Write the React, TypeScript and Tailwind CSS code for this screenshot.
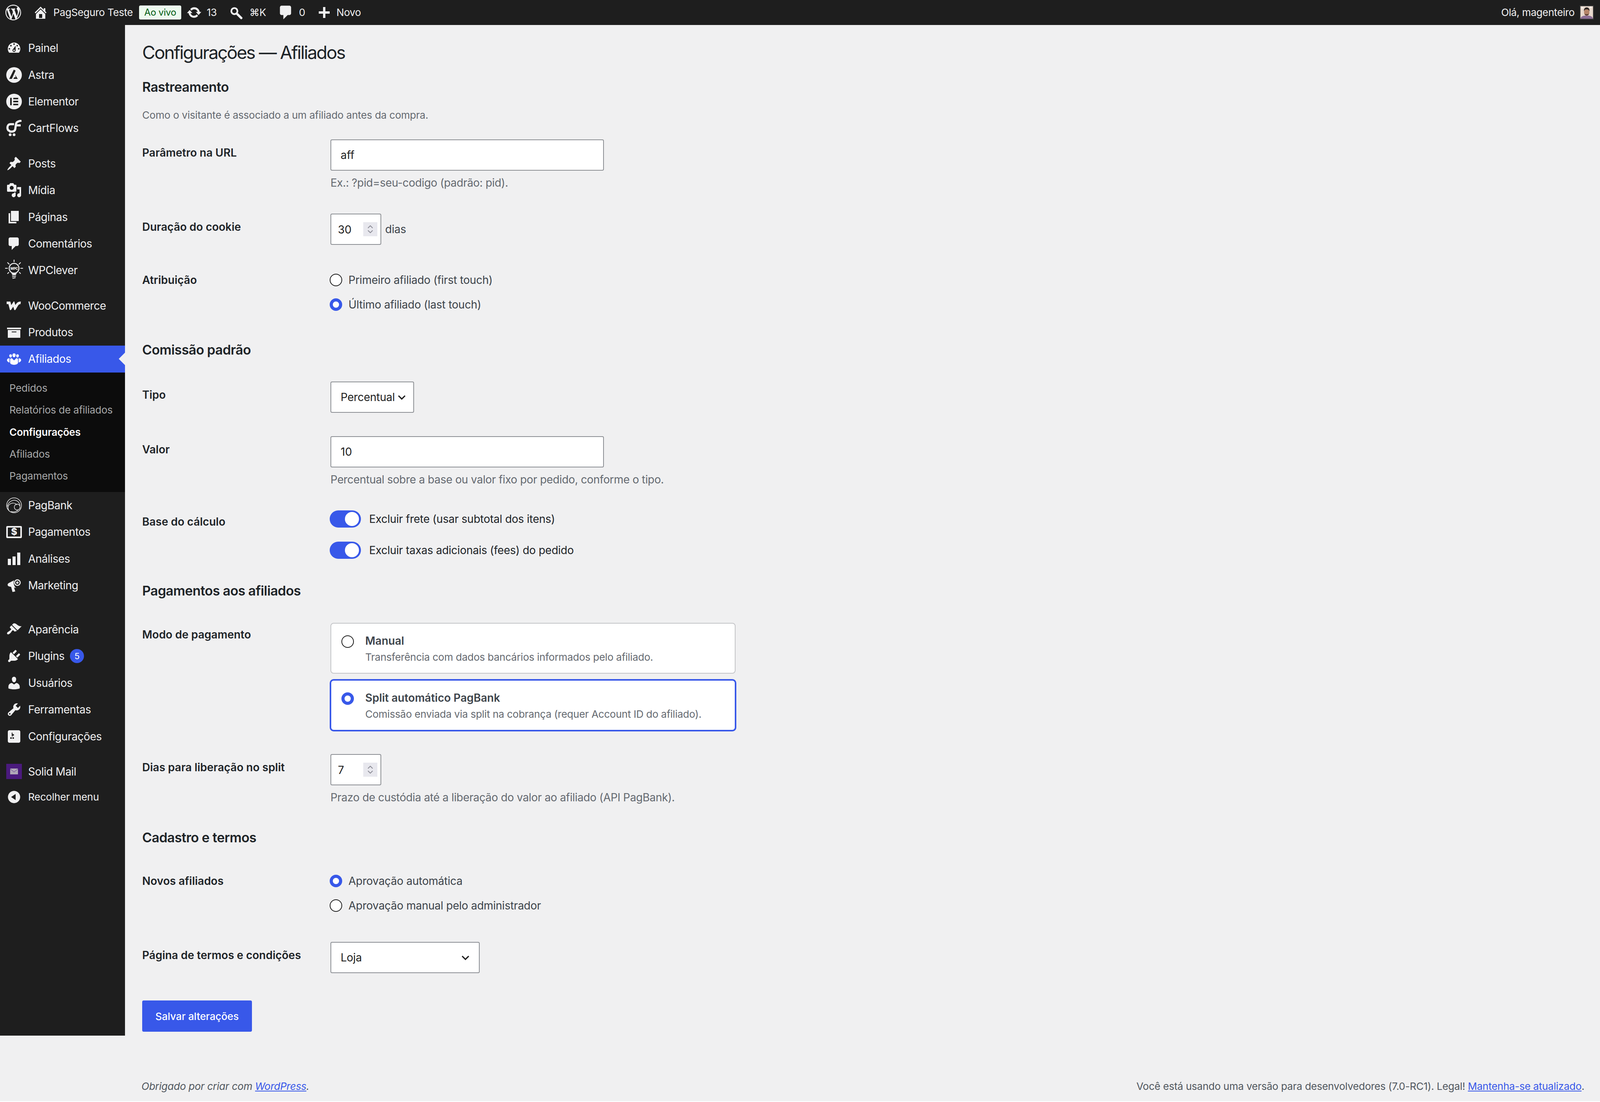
import React from 'react';

// dashicons, drawn on their 20x20 grid
const dash: Record<string, string> = {
  logo: 'M20 10c0-5.51-4.49-10-10-10C4.48 0 0 4.49 0 10c0 5.52 4.48 10 10 10 5.51 0 10-4.48 10-10zM7.78 15.37L4.37 6.22c.55-.02 1.17-.08 1.17-.08.5-.06.44-1.13-.06-1.11 0 0-1.45.11-2.37.11-.18 0-.37 0-.58-.01C4.12 2.69 6.87 1.11 10 1.11c2.33 0 4.45.87 6.05 2.34-.68-.11-1.65.39-1.65 1.58 0 .74.45 1.36.9 2.1.35.61.55 1.36.55 2.46 0 1.49-1.4 5-1.4 5l-3.03-8.37c.54-.02.82-.17.82-.17.5-.05.44-1.25-.06-1.22 0 0-1.44.12-2.38.12-.87 0-2.33-.12-2.33-.12-.5-.03-.56 1.2-.06 1.22l.92.08 1.26 3.41zM17.41 10c.24-.64.74-1.87.43-4.25.7 1.29 1.05 2.71 1.05 4.25 0 3.29-1.73 6.24-4.4 7.78.97-2.59 1.94-5.2 2.92-7.78zM6.1 18.09C3.12 16.65 1.11 13.53 1.11 10c0-1.3.23-2.48.72-3.59C3.25 10.3 4.67 14.2 6.1 18.09zm4.03-6.63l2.58 6.98c-.86.29-1.76.45-2.71.45-.79 0-1.57-.11-2.29-.33.81-2.38 1.62-4.74 2.42-7.1z',
  home: 'M16 8.5l1.53 1.53-1.06 1.06L10 4.62l-6.47 6.47-1.06-1.06L10 2.5l4 4v-2h2v4zm-6-2.46l6 5.99V18H4v-5.97zM12 17v-5H8v5h4z',
  update: 'M10.2 3.28c3.53 0 6.43 2.61 6.92 6h2.08l-3.5 4-3.5-4h2.32c-.45-1.97-2.21-3.45-4.32-3.45-1.45 0-2.73.71-3.54 1.78L4.95 5.66C6.23 4.2 8.11 3.28 10.2 3.28zm-.4 13.44c-3.52 0-6.43-2.61-6.92-6H.8l3.5-4c1.17 1.33 2.33 2.67 3.5 4H5.48c.45 1.97 2.21 3.45 4.32 3.45 1.45 0 2.73-.71 3.54-1.78l1.71 1.95c-1.28 1.46-3.15 2.38-5.25 2.38z',
  comment: 'M5 2h9c1.1 0 2 .9 2 2v7c0 1.1-.9 2-2 2h-2l-5 5v-5H5c-1.1 0-2-.9-2-2V4c0-1.1.9-2 2-2z',
  plus: 'M17 8.500v3h-5.500V17h-3v-5.500H3v-3h5.500V3h3v5.500z',
  dashboard: 'M3.76 16h12.48c1.1-1.37 1.76-3.11 1.76-5 0-4.42-3.58-8-8-8s-8 3.58-8 8c0 1.89.66 3.63 1.76 5zM10 4c.55 0 1 .45 1 1s-.45 1-1 1-1-.45-1-1 .45-1 1-1zM6 6c.55 0 1 .45 1 1s-.45 1-1 1-1-.45-1-1 .45-1 1-1zm8 0c.55 0 1 .45 1 1s-.45 1-1 1-1-.45-1-1 .45-1 1-1zm-5.37 5.55L12 7v6c0 1.1-.9 2-2 2s-2-.9-2-2c0-.57.24-1.08.63-1.45zM4 10c.55 0 1 .45 1 1s-.45 1-1 1-1-.45-1-1 .45-1 1-1zm12 0c.55 0 1 .45 1 1s-.45 1-1 1-1-.45-1-1 .45-1 1-1zm-5 3c0-.55-.45-1-1-1s-1 .45-1 1 .45 1 1 1 1-.45 1-1z',
  post: 'M10.44 3.02l1.82-1.82 6.36 6.35-1.83 1.82c-1.05-.68-2.48-.57-3.41.36l-.75.75c-.92.93-1.04 2.35-.35 3.41l-1.83 1.82-2.41-2.41-2.8 2.79c-.42.42-3.38 2.71-3.8 2.29s1.86-3.39 2.28-3.81l2.79-2.79L4.1 9.36l1.83-1.82c1.05.69 2.48.57 3.4-.36l.75-.75c.93-.92 1.05-2.35.36-3.41z',
  media: 'M13 11V4c0-.55-.45-1-1-1h-1.67L9 1H5L3.67 3H2c-.55 0-1 .45-1 1v7c0 .55.45 1 1 1h10c.55 0 1-.45 1-1zM7 4.5c1.38 0 2.5 1.12 2.5 2.5S8.38 9.5 7 9.5 4.5 8.38 4.5 7 5.62 4.5 7 4.5zM14 6h5v10.5c0 1.38-1.12 2.5-2.5 2.5S14 17.88 14 16.5s1.12-2.5 2.5-2.5c.17 0 .34.02.5.05V9h-3V6zm-4 8.05V13h2v3.5c0 1.38-1.12 2.5-2.5 2.5S7 17.88 7 16.5 8.12 14 9.5 14c.17 0 .34.02.5.05z',
  page: 'M6 15V2h10v13H6zm-1 1h8v2H3V5h2v11z',
  archive: 'M19 4v2H1V4h18zM2 7h16v10H2V7zm11 3V9H7v1h6z',
  chart: 'M18 18V2h-4v16h4zm-6 0V7H8v11h4zm-6 0v-8H2v8h4z',
  appearance: 'M14.48 11.06L7.41 3.99l1.5-1.5c.5-.56 2.3-.47 3.51.32 1.21.8 1.43 1.28 2.91 2.1 1.18.64 2.45 1.26 4.45.85zm-.71.71L6.7 4.7 4.93 6.47c-.39.39-.39 1.02 0 1.41l1.06 1.06c.39.39.39 1.03 0 1.42-.6.6-1.43 1.11-2.21 1.69-.35.26-.7.53-1.01.84C1.43 13.23.4 14.91 1.4 15.9c.99 1 2.68-.03 3.95-1.36.31-.31.58-.66.85-1.02.57-.78 1.08-1.61 1.69-2.21.39-.39 1.02-.39 1.41 0l1.06 1.06c.39.39 1.02.39 1.41 0z',
  plugins: 'M13.11 4.36L9.87 7.6 8 5.73l3.24-3.24c.35-.34 1.05-.2 1.56.32.52.51.66 1.21.31 1.55zm-8 1.77l.91-1.12 9.01 9.01-1.19.84c-.71.71-2.63 1.16-3.82 1.16H6.14L4.9 17.26c-.59.59-1.54.59-2.12 0-.59-.58-.59-1.53 0-2.12l1.24-1.24v-3.88c0-1.13.4-3.19 1.09-3.89zm7.26 3.97l3.24-3.24c.34-.35 1.04-.21 1.55.31.52.51.66 1.21.31 1.55l-3.24 3.25z',
  users: 'M10 9.25c-2.27 0-2.73-3.44-2.73-3.44C7 4.02 7.82 2 9.97 2c2.16 0 2.98 2.02 2.71 3.81 0 0-.41 3.44-2.68 3.44zm0 2.57L12.72 10c2.39 0 4.52 2.33 4.52 4.53v2.49s-3.65 1.13-7.24 1.13c-3.65 0-7.24-1.13-7.24-1.13v-2.49c0-2.25 1.94-4.48 4.47-4.48z',
  tools: 'M16.68 9.77c-1.34 1.34-3.3 1.67-4.95.99l-5.41 6.52c-.99.99-2.59.99-3.58 0s-.99-2.59 0-3.57l6.52-5.42c-.68-1.65-.35-3.61.99-4.95 1.28-1.28 3.12-1.62 4.72-1.06l-2.89 2.89 2.82 2.82 2.86-2.87c.53 1.58.18 3.39-1.08 4.65zM3.81 16.21c.4.39 1.04.39 1.43 0 .4-.4.4-1.04 0-1.43-.39-.4-1.03-.4-1.43 0-.39.39-.39 1.03 0 1.43z',
  settings: 'M18 16V4c0-1.1-.9-2-2-2H4c-1.1 0-2 .9-2 2v12c0 1.1.9 2 2 2h12c1.1 0 2-.9 2-2zM8 11h1c.55 0 1 .45 1 1s-.45 1-1 1H8v1.5c0 .28-.22.5-.5.5s-.5-.22-.5-.5V13H6c-.55 0-1-.45-1-1s.45-1 1-1h1V5.5c0-.28.22-.5.5-.5s.5.22.5.5V7h1c.55 0 1 .45 1 1s-.45 1-1 1h-1v5.5c0 .28-.22.5-.5.5s-.5-.22-.5-.5V9z',
  collapse: 'M10 2.16c4.33 0 7.84 3.51 7.84 7.84s-3.51 7.84-7.84 7.84S2.16 14.33 2.16 10 5.71 2.16 10 2.16zm2 11.72V6.12L6.18 9.97z',
  groups: 'M8.03 4.46c-.29 1.28.55 3.46 1.97 3.46s2.25-2.18 1.96-3.46c-.22-.98-1.08-1.63-1.96-1.5-.88-.13-1.74.52-1.97 1.5zm-4.13.9c-.25 1.08.47 2.93 1.67 2.93s1.92-1.85 1.67-2.93c-.19-.83-.92-1.39-1.67-1.27-.75-.12-1.48.44-1.67 1.27zm8.86 0c-.25 1.08.47 2.93 1.66 2.93 1.2 0 1.92-1.85 1.67-2.93-.19-.83-.92-1.39-1.67-1.27-.74-.12-1.47.44-1.66 1.27zM7.2 9.2C5.9 9 5 9.8 5 11v4c0 1.5 2.5 2.6 5 2.6s5-1.1 5-2.6v-4c0-1.2-.9-2-2.2-1.8L10 12zM4.2 9.3C2.6 9 1.1 9.9 1 11.3c-.1 1.4.5 2.6 3.2 3.4zm11.6 0c1.6-.3 3.1.6 3.2 2 .1 1.4-.5 2.6-3.2 3.4z',
};

const Dash = ({ d, className = 'w-[40px] h-[40px]' }: { d: string; className?: string }) => (
  <svg viewBox="0 0 20 20" className={`${className} fill-current shrink-0`}>
    <path d={d} />
  </svg>
);

const SearchIcon = () => (
  <svg viewBox="0 0 20 20" className="w-[40px] h-[40px] ml-[30px] shrink-0" fill="none" stroke="currentColor">
    <circle cx="7.500" cy="8.200" r="3.900" strokeWidth="2.200" />
    <path d="M11.500 12.300l4.800 4.800" strokeWidth="3" strokeLinecap="round" />
  </svg>
);

const AstraIcon = () => (
  <svg viewBox="0 0 20 20" className="w-[40px] h-[40px] shrink-0">
    <circle cx="10" cy="10" r="10" fill="#f0f0f1" />
    <path d="M9.600 3.200 12 4.400 7.200 15H3.800zM11.300 9.600 14.700 15H9.200l1-2h1.900z" fill="#1e1e1e" />
  </svg>
);

const ElementorIcon = () => (
  <svg viewBox="0 0 20 20" className="w-[40px] h-[40px] shrink-0">
    <circle cx="10" cy="10" r="10" fill="#f0f0f1" />
    <path d="M5 5.200h2v9.600H5zM9 5.200h6.300v1.900H9zM9 9.050h6.300v1.900H9zM9 12.900h6.300v1.900H9z" fill="#1e1e1e" />
  </svg>
);

const CartFlowsIcon = () => (
  <svg viewBox="0 0 40 42" className="w-[40px] h-[42px] shrink-0" fill="none" stroke="#f0f0f1" strokeWidth="5.500">
    <path d="M39 2C31 3 26 5 25 10L23 24C22 28 19 30 14 30H8" />
    <path d="M20 11H11C5 11 3 16 3 20C3 25 6 28 10 29" />
    <path d="M25 14H37" />
    <circle cx="10" cy="38" r="3.600" fill="#f0f0f1" stroke="none" />
    <circle cx="20" cy="38" r="3.600" fill="#f0f0f1" stroke="none" />
  </svg>
);

const WpcIcon = () => (
  <svg viewBox="0 0 46 51" className="w-[46px] h-[51px] -mt-[4px] -mx-[3px] shrink-0">
    <g stroke="#f0f0f1" strokeWidth="2.200" fill="none">
      <path d="M23 0v6M0 22h7M39 22h7M6 7l5 5M40 7l-5 5M6 36l4-4M40 36l-4-4" />
      <circle cx="23" cy="22" r="12.500" fill="#1e1e1e" strokeWidth="2.600" />
      <path d="M18 40l10-2M18 44l10-2M19 48l8-2" />
    </g>
    <path d="M16 34h14l-2 4H18z" fill="#f0f0f1" />
    <text x="23" y="25.500" textAnchor="middle" fontSize="8.500" fontWeight="800" fill="#f0f0f1" fontFamily="Inter">WPC</text>
  </svg>
);

const WooIcon = () => (
  <svg viewBox="0 0 40 22" className="w-[40px] h-[22px] shrink-0" fill="none" stroke="#f0f0f1" strokeWidth="6.500">
    <path d="M1 3.500H8L11.500 17 19 6 22.500 17 28 8C30 5 33 3 37 3.500" />
  </svg>
);

const PagBankIcon = () => (
  <svg viewBox="0 0 40 40" className="w-[40px] h-[40px] shrink-0" fill="none" stroke="#f0f0f1" strokeWidth="1.500">
    <circle cx="20" cy="20" r="19" />
    <path d="M2.500 23C6 9 18 5 26 8c4 1.500 8 6 9.500 13M7 34c-4-6-3-13 1-16 6-5 15-5 19 1" />
    <ellipse cx="28" cy="24.500" rx="7.500" ry="7.500" />
    <path d="M12 36c6 1.500 14 1 19-5" />
  </svg>
);

const MoneyIcon = () => (
  <div className="w-[40px] h-[31px] shrink-0 border-[4px] border-[#f0f0f1] rounded-[3px] flex items-center justify-center text-[24px] font-extrabold leading-none text-[#f0f0f1]">$</div>
);

const MegaphoneIcon = () => (
  <svg viewBox="0 0 34 36" className="w-[34px] h-[36px] shrink-0" fill="#f0f0f1">
    <path d="M17 5 3.500 12C-.500 14.500-.500 18.500 3.500 20.500l6 1.500 3.500 13 7-1.500-3-10 5.500 1.200C16 20 15 11 17 5z" />
    <circle cx="25.500" cy="11" r="8.500" fill="#f0f0f1" />
    <circle cx="25.500" cy="11" r="5.800" fill="#1e1e1e" />
    <circle cx="25.500" cy="11" r="3" fill="#f0f0f1" />
  </svg>
);

const MailIcon = () => (
  <div className="w-[40px] h-[39px] shrink-0 bg-[#4a1a7d] flex items-center justify-center">
    <svg viewBox="0 0 20 15" className="w-[20px] h-[15px]">
      <rect width="20" height="15" fill="#b0a8b8" />
      <path d="M0 1l10 8 10-8" fill="none" stroke="#5a2a90" strokeWidth="1" />
    </svg>
  </div>
);

const Avatar = () => (
  <svg viewBox="0 0 36 36" className="w-[36px] h-[36px]">
    <rect width="36" height="36" fill="#3a3a3a" />
    <rect x="2" y="2" width="32" height="32" fill="#e8d8cc" />
    <circle cx="7" cy="6" r="2.500" fill="#f8f0ea" />
    <circle cx="28" cy="5" r="2.500" fill="#f8f0ea" />
    <path d="M2 34c1-6 6-7 10-8h12c4 1 9 2 10 8z" fill="#8d6e95" />
    <ellipse cx="18" cy="17" rx="7" ry="9.500" fill="#b58468" />
    <path d="M11 15c-1-7 3-10 7-10s8 3 7 10c-1-3-2-5-7-5s-6 2-7 5z" fill="#2c2421" />
    <path d="M12 21c2 6 10 6 12 0-1 1-3 1.500-6 1.500S13 22 12 21z" fill="#4c372e" />
  </svg>
);

type Item = { label: string; icon: React.ReactNode; badge?: string; current?: boolean };

const group1: Item[] = [
  { label: 'Painel', icon: <Dash d={dash.dashboard} /> },
  { label: 'Astra', icon: <AstraIcon /> },
  { label: 'Elementor', icon: <ElementorIcon /> },
  { label: 'CartFlows', icon: <CartFlowsIcon /> },
];
const group2: Item[] = [
  { label: 'Posts', icon: <Dash d={dash.post} /> },
  { label: 'Mídia', icon: <Dash d={dash.media} /> },
  { label: 'Páginas', icon: <Dash d={dash.page} /> },
  { label: 'Comentários', icon: <Dash d={dash.comment} /> },
  { label: 'WPClever', icon: <WpcIcon /> },
];
const group3: Item[] = [
  { label: 'WooCommerce', icon: <WooIcon /> },
  { label: 'Produtos', icon: <Dash d={dash.archive} /> },
  { label: 'Afiliados', icon: <Dash d={dash.groups} />, current: true },
];
const subItems = ['Pedidos', 'Relatórios de afiliados', 'Configurações', 'Afiliados', 'Pagamentos'];
const group4: Item[] = [
  { label: 'PagBank', icon: <PagBankIcon /> },
  { label: 'Pagamentos', icon: <MoneyIcon /> },
  { label: 'Análises', icon: <Dash d={dash.chart} /> },
  { label: 'Marketing', icon: <MegaphoneIcon /> },
];
const group5: Item[] = [
  { label: 'Aparência', icon: <Dash d={dash.appearance} /> },
  { label: 'Plugins', icon: <Dash d={dash.plugins} />, badge: '5' },
  { label: 'Usuários', icon: <Dash d={dash.users} /> },
  { label: 'Ferramentas', icon: <Dash d={dash.tools} /> },
  { label: 'Configurações', icon: <Dash d={dash.settings} /> },
];

const MenuRow = ({ item }: { item: Item }) => (
  <div className={`relative flex items-center h-[68.4px] text-[28px] leading-none tracking-[-0.5px] text-[#f0f0f1] ${item.current ? 'bg-[#3858e9] text-white' : ''}`}>
    <div className="w-[72px] flex justify-center items-center shrink-0">{item.icon}</div>
    <span>{item.label}</span>
    {item.badge && (
      <span className="ml-[14px] w-[36px] h-[36px] rounded-full bg-[#3858e9] text-white text-[22px] flex items-center justify-center">{item.badge}</span>
    )}
    {item.current && (
      <span className="absolute right-0 top-[18px] w-0 h-0 border-y-[16px] border-y-transparent border-r-[16px] border-r-[#f0f0f1]" />
    )}
  </div>
);

const Sidebar = () => (
  <nav className="w-[320px] h-[2588px] shrink-0 bg-[#1e1e1e] pt-[25px]">
    {group1.map((i) => <MenuRow key={i.label} item={i} />)}
    <div className="h-[22px]" />
    {group2.map((i) => <MenuRow key={i.label} item={i} />)}
    <div className="h-[22px]" />
    {group3.map((i) => <MenuRow key={i.label} item={i} />)}
    <div className="bg-[#0c0c0c] py-[12px]">
      {subItems.map((s) => (
        <div key={s} className={`h-[56.4px] flex items-center pl-[24px] text-[26px] leading-none tracking-[-0.28px] ${s === 'Configurações' ? 'text-white font-semibold' : 'text-[#a7a8a9]'}`}>{s}</div>
      ))}
    </div>
    {group4.map((i) => <MenuRow key={i.label} item={i} />)}
    <div className="h-[44.6px]" />
    {group5.map((i) => <MenuRow key={i.label} item={i} />)}
    <div className="h-[22px]" />
    <MenuRow item={{ label: 'Solid Mail', icon: <MailIcon /> }} />
    <div className="flex items-center h-[62px] text-[26px] leading-none tracking-[-0.25px] text-[#f0f0f1]">
      <div className="w-[72px] flex justify-center shrink-0"><Dash d={dash.collapse} /></div>
      <span>Recolher menu</span>
    </div>
  </nav>
);

const TopBar = () => (
  <header className="h-[64px] bg-[#1e1e1e] flex items-center justify-between text-[26px] leading-none tracking-[-0.4px] text-[#f0f0f1]">
    <div className="flex items-center">
      <Dash d={dash.logo} className="w-[40px] h-[40px] ml-[14px]" />
      <Dash d={dash.home} className="w-[40px] h-[40px] ml-[30px]" />
      <span className="ml-[12.5px]">PagSeguro Teste</span>
      <span className="ml-[16px] h-[36px] w-[108px] rounded-[4px] bg-[#edfaef] text-[#005c12] text-[24px] flex items-center justify-center">Ao vivo</span>
      <Dash d={dash.update} className="w-[40px] h-[40px] ml-[13px]" />
      <span className="ml-[12px]">13</span>
      <SearchIcon />
      <span className="ml-[13.5px]">⌘K</span>
      <Dash d={dash.comment} className="w-[44px] h-[44px] ml-[29px]" />
      <span className="ml-[11px]">0</span>
      <Dash d={dash.plus} className="w-[40px] h-[40px] ml-[29px]" />
      <span className="ml-[11px]">Novo</span>
    </div>
    <div className="flex items-center pr-[16px]">
      <span>Olá, magenteiro</span>
      <span className="ml-[13px]"><Avatar /></span>
    </div>
  </header>
);

const H2 = ({ children, className = '' }: { children: React.ReactNode; className?: string }) => (
  <h2 className={`text-[34px] leading-[44px] font-semibold tracking-[-0.6px] text-[#1d2327] ${className}`}>{children}</h2>
);

const Hint = ({ children, className = '' }: { children: React.ReactNode; className?: string }) => (
  <p className={`text-[28px] leading-[36px] tracking-[-0.35px] text-[#646970] ${className}`}>{children}</p>
);

const Row = ({ label, labelClass = 'pt-[16px]', className = '', children }: { label: string; labelClass?: string; className?: string; children: React.ReactNode }) => (
  <div className={`flex ${className}`}>
    <div className={`w-[482px] shrink-0 text-[28px] leading-[36px] font-semibold text-[#1d2327] ${labelClass}`}>{label}</div>
    <div>{children}</div>
  </div>
);

const TextField = ({ value }: { value: string }) => (
  <input readOnly value={value} className="block w-[700px] h-[80px] bg-white border-2 border-[#8c8f94] rounded-[4px] px-[24px] text-[28px] text-[#1e1e1e] outline-none" />
);

const NumberField = ({ value }: { value: string }) => (
  <div className="relative w-[130px] h-[80px] bg-white border-2 border-[#8c8f94] rounded-[4px] flex items-center pl-[17px] text-[28px] text-[#1e1e1e] pt-[2px]">
    {value}
    <span className="absolute right-[8px] top-[20px] w-[36px] h-[36px] bg-[#e8e8ee] flex flex-col items-center justify-center gap-[4px]">
      <svg viewBox="0 0 14 8" className="w-[14px] h-[8px]" fill="none" stroke="#8a8a94" strokeWidth="2"><path d="M1 7l6-6 6 6" /></svg>
      <svg viewBox="0 0 14 8" className="w-[14px] h-[8px]" fill="none" stroke="#8a8a94" strokeWidth="2"><path d="M1 1l6 6 6-6" /></svg>
    </span>
  </div>
);

const Chevron = () => (
  <svg viewBox="0 0 20 12" className="w-[21px] h-[13px] shrink-0" fill="none" stroke="#1e1e1e" strokeWidth="3"><path d="M2 2l8 8 8-8" /></svg>
);

const SelectBox = ({ value, className }: { value: string; className: string }) => (
  <div className={`h-[80px] bg-white border-2 border-[#8c8f94] rounded-[4px] flex items-center pl-[24px] text-[28px] tracking-[-0.25px] text-[#1e1e1e] ${className}`}>
    <span>{value}</span>
    <Chevron />
  </div>
);

const RadioDot = ({ on }: { on?: boolean }) => (
  <span className={`block w-[32px] h-[32px] rounded-full bg-white shrink-0 ${on ? 'border-[8px] border-[#3858e9]' : 'border-2 border-[#1e1e1e]'}`} />
);

const Radio = ({ on, children }: { on?: boolean; children: React.ReactNode }) => (
  <div className="h-[36px] flex items-center gap-[16px] -ml-[2px] text-[28px] leading-[36px] tracking-[-0.25px] text-[#3c434a]">
    <RadioDot on={on} />
    <span>{children}</span>
  </div>
);

const Toggle = ({ children }: { children: React.ReactNode }) => (
  <div className="h-[44px] flex items-center gap-[21px] -ml-[2px] text-[28px] tracking-[-0.25px] text-[#1d2327]">
    <span className="relative block w-[80px] h-[44px] rounded-full bg-[#3858e9] shrink-0">
      <span className="absolute right-[5px] top-[4px] w-[36px] h-[36px] rounded-full bg-white" />
    </span>
    <span>{children}</span>
  </div>
);

const PayCard = ({ on, title, desc }: { on?: boolean; title: string; desc: string }) => (
  <div className={`w-[1037px] h-[130px] bg-white rounded-[8px] pt-[26px] pl-[26px] flex gap-[29px] border-2 ${on ? 'border-[#3858e9] shadow-[0_0_0_2px_#3858e9]' : 'border-[#c3c4c7]'}`}>
    <div className="pt-[4px]"><RadioDot on={on} /></div>
    <div>
      <div className="text-[28px] leading-[36px] font-semibold text-[#3c434a]">{title}</div>
      <div className="mt-[6px] text-[26px] leading-[36px] tracking-[-0.25px] text-[#646970]">{desc}</div>
    </div>
  </div>
);

export default function App() {
  return (
    <div className="[font-family:Inter,sans-serif] min-h-[2820px] bg-[#f0f0f1]">
      <TopBar />
      <div className="flex">
        <Sidebar />
        <main className="flex-1 pl-[44px] pr-[40px]">
          <h1 className="mt-[40px] text-[46px] leading-[60px] font-normal tracking-[-2.45px] text-[#1d2327]">Configurações — Afiliados</h1>

          <H2 className="mt-[37px]">Rastreamento</H2>
          <Hint className="mt-[32px] !text-[26px] !tracking-[-0.22px]">Como o visitante é associado a um afiliado antes da compra.</Hint>

          <Row label="Parâmetro na URL" className="mt-[44px]">
            <TextField value="aff" />
            <Hint className="mt-[13px]">Ex.: ?pid=seu-codigo (padrão: pid).</Hint>
          </Row>

          <Row label="Duração do cookie" className="mt-[61px]">
            <div className="flex items-center gap-[10px]">
              <NumberField value="30" />
              <span className="text-[28px] tracking-[-0.25px] text-[#3c434a]">dias</span>
            </div>
          </Row>

          <Row label="Atribuição" labelClass="" className="mt-[72px]">
            <div className="flex flex-col gap-[27px]">
              <Radio>Primeiro afiliado (first touch)</Radio>
              <Radio on>Último afiliado (last touch)</Radio>
            </div>
          </Row>

          <H2 className="mt-[76px]">Comissão padrão</H2>

          <Row label="Tipo" className="mt-[59px]">
            <SelectBox value="Percentual" className="w-[214px] gap-[7px]" />
          </Row>

          <Row label="Valor" className="mt-[60px]">
            <TextField value="10" />
            <Hint className="mt-[13px]">Percentual sobre a base ou valor fixo por pedido, conforme o tipo.</Hint>
          </Row>

          <Row label="Base do cálculo" labelClass="pt-[11px]" className="mt-[61px]">
            <div className="flex flex-col gap-[36px]">
              <Toggle>Excluir frete (usar subtotal dos itens)</Toggle>
              <Toggle>Excluir taxas adicionais (fees) do pedido</Toggle>
            </div>
          </Row>

          <H2 className="mt-[60px]">Pagamentos aos afiliados</H2>

          <Row label="Modo de pagamento" labelClass="pt-[12px]" className="mt-[60px]">
            <div className="flex flex-col gap-[16px]">
              <PayCard title="Manual" desc="Transferência com dados bancários informados pelo afiliado." />
              <PayCard on title="Split automático PagBank" desc="Comissão enviada via split na cobrança (requer Account ID do afiliado)." />
            </div>
          </Row>

          <Row label="Dias para liberação no split" className="mt-[60px]">
            <NumberField value="7" />
            <Hint className="mt-[13px]">Prazo de custódia até a liberação do valor ao afiliado (API PagBank).</Hint>
          </Row>

          <H2 className="mt-[63px]">Cadastro e termos</H2>

          <Row label="Novos afiliados" labelClass="" className="mt-[71px]">
            <div className="flex flex-col gap-[27px]">
              <Radio on>Aprovação automática</Radio>
              <Radio>Aprovação manual pelo administrador</Radio>
            </div>
          </Row>

          <Row label="Página de termos e condições" className="mt-[75px]">
            <SelectBox value="Loja" className="w-[382px] justify-between pr-[24px]" />
          </Row>

          <button className="block mt-[70px] w-[281px] h-[80px] rounded-[4px] bg-[#3858e9] text-white text-[26px] tracking-[-0.1px] font-medium">Salvar alterações</button>

          <footer className="mt-[122px] flex justify-between text-[26px] leading-[36px] tracking-[-0.25px] text-[#50575e]">
            <span className="italic -ml-[2px]">Obrigado por criar com <a className="text-[#3858e9] underline">WordPress</a>.</span>
            <span>Você está usando uma versão para desenvolvedores (7.0-RC1). Legal! <a className="text-[#3858e9] underline">Mantenha-se atualizado</a>.</span>
          </footer>
        </main>
      </div>
    </div>
  );
}
